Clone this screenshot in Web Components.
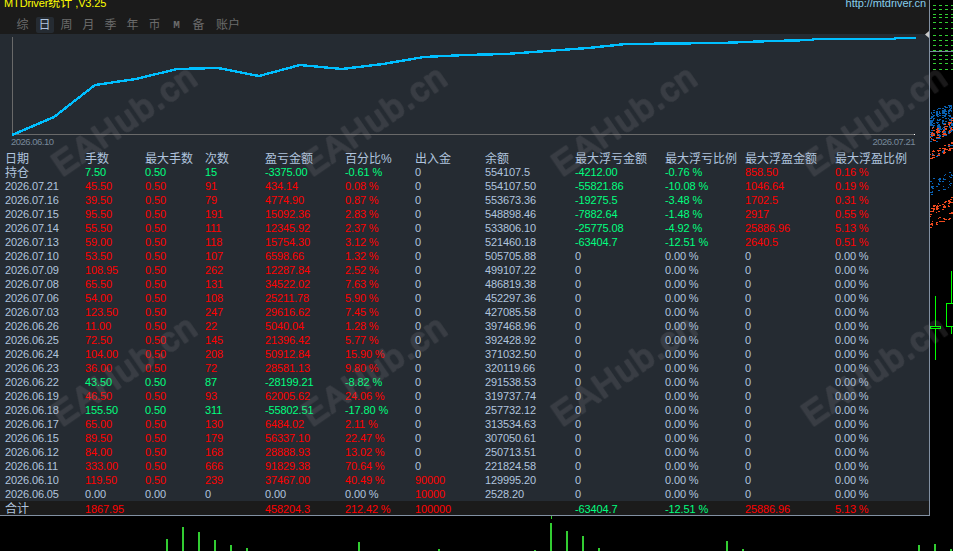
<!DOCTYPE html>
<html lang="zh-CN">
<head>
<meta charset="utf-8">
<title>MTDriver统计</title>
<style>
  body {
    margin: 0;
    width: 953px;
    height: 551px;
    overflow: hidden;
    background: #000;
    font-family: "Liberation Sans", "Noto Sans CJK SC", sans-serif;
    font-size: 11px;
    color: #b0c4de;
  }
  .cjk {
    font-size: 12px;
    letter-spacing: 0;
  }
</style>
</head>
<body>
<trade-desktop>
  <price-chart slot="back"></price-chart>
  <stats-panel>
    <span slot="title">MTDriver<span class="cjk">统计</span> ,V3.25</span>
    <span slot="link">http://mtdriver.cn</span>
    <tab-bar slot="tabs" items="综,日,周,月,季,年,币,M,备,账户" active="日"></tab-bar>
    <equity-chart from="2026.06.10" to="2026.07.21"></equity-chart>
    <stats-table></stats-table>
  </stats-panel>
  <water-mark slot="front">EAHub.cn</water-mark>
</trade-desktop>

<script>
/**
 * Desktop: market chart at the back, panel in the flow, watermark on top.
 */
customElements.define('trade-desktop',
  class TradeDesktop extends HTMLElement {
    constructor () {
      super()
      this.attachShadow({ mode: 'open' }).innerHTML = `
        <style>
          :host {
            display: block;
            position: relative;
            width: 953px;
            height: 551px;
            overflow: hidden;
          }
          .layer {
            position: absolute;
            inset: 0;
            pointer-events: none;
          }
          main {
            position: relative;
          }
        </style>
        <div class="layer"><slot name="back"></slot></div>
        <main><slot></slot></main>
        <div class="layer"><slot name="front"></slot></div>
      `
    }
  }
)

/**
 * Market chart behind the panel.
 */
customElements.define('price-chart',
  class PriceChart extends HTMLElement {
    constructor () {
      super()
      this.attachShadow({ mode: 'open' }).innerHTML = `
        <style>
          :host { display: block; }
          svg { display: block; }
        </style>
        <svg width="953" height="551" shape-rendering="crispEdges"></svg>
      `
    }

    /**
     * Draws one group of ticks that rises to the right.
     */
    ticks (color, y, height, count, seed) {
      let out = ''
      let s = seed
      const next = () => {
        s = (s * 1103515245 + 12345) % 2147483648
        return s / 2147483648
      }
      for (let i = 0; i < count; i++) {
        const col = i % 4
        const dx = Math.floor(next() * 4)
        const x = 930 + col * 6 + dx
        const top = Math.round(y - col * 3 - dx + next() * height)
        out += `<rect x="${x}" y="${top}" width="${1 + Math.round(next() * 1.6)}" height="1" fill="${color}"/>`
      }
      return out
    }

    connectedCallback () {
      let svg = ''
      for (const y of [5, 9, 14, 17, 22, 28, 35, 40, 45, 50, 55, 59, 63, 69]) {
        for (const x of [933, 939, 945, 951]) {
          svg += `<rect x="${x}" y="${y}" width="3" height="1" fill="#32cd32"/>`
        }
      }
      svg += '<rect x="930" y="51" width="23" height="1" fill="#778899"/>'
      svg += this.ticks('#0a62b4', 113, 31, 210, 7)
      svg += this.ticks('#f04a1e', 130, 13, 60, 21)
      svg += this.ticks('#0a62b4', 154, 6, 14, 5)
      svg += this.ticks('#f04a1e', 152, 8, 44, 9)
      svg += this.ticks('#0a62b4', 181, 17, 40, 13)
      svg += this.ticks('#f04a1e', 208, 8, 56, 3)
      svg += this.ticks('#f04a1e', 223, 5, 24, 17)

      // Candles
      svg += `
        <g fill="#000" stroke="#00ff00">
          <path d="M935.5 296V360M951.5 271V334"/>
          <rect x="930.5" y="326.5" width="10" height="2"/>
          <rect x="946.5" y="303.5" width="12" height="23"/>
        </g>`

      // Volumes
      const volumes = [
        [166, 539], [182, 527], [198, 532], [214, 540], [230, 545], [246, 548],
        [358, 542], [438, 549], [534, 550], [550, 523], [566, 531], [582, 536],
        [598, 548], [726, 541], [742, 549], [918, 545], [934, 544], [950, 549]
      ]
      for (const [x, y] of volumes) {
        svg += `<rect x="${x}" y="${y}" width="2" height="${551 - y}" fill="#32cd32"/>`
      }
      svg += '<rect x="551" y="516" width="1" height="3" fill="#32cd32"/>'
      this.shadowRoot.querySelector('svg').innerHTML = svg
    }
  }
)

/**
 * Panel frame with title line and tabs.
 */
customElements.define('stats-panel',
  class StatsPanel extends HTMLElement {
    constructor () {
      super()
      this.attachShadow({ mode: 'open' }).innerHTML = `
        <style>
          :host {
            display: flex;
            flex-direction: column;
            box-sizing: border-box;
            position: relative;
            width: 930px;
            height: 516px;
            background: #252b32;
            border-right: 1px solid #8290a2;
            border-bottom: 1px solid #8290a2;
          }
          header {
            height: 34px;
            background: #1b1b1b;
          }
          .top {
            display: flex;
            justify-content: space-between;
            height: 17px;
            padding: 0 3px 0 4px;
            line-height: 14px;
            margin-top: -4px;
            letter-spacing: -0.12px;
          }
          .title { color: #ffff00; }
          .link { color: #87ceeb; letter-spacing: -0.05px; }
          .top + slot { display: block; padding-top: 4px; }
          .handle {
            position: absolute;
            right: 0;
            top: 31px;
          }
        </style>
        <header>
          <div class="top">
            <div class="title"><slot name="title"></slot></div>
            <div class="link"><slot name="link"></slot></div>
          </div>
          <slot name="tabs"></slot>
        </header>
        <slot></slot>
        <svg class="handle" width="4" height="7"><path d="M4 0V7L0 3.5Z" fill="#c8c8c8"/></svg>
      `
    }
  }
)

/**
 * Period tabs.
 */
customElements.define('tab-bar',
  class TabBar extends HTMLElement {
    constructor () {
      super()
      this.attachShadow({ mode: 'open' }).innerHTML = `
        <style>
          :host {
            display: flex;
            gap: 4px;
            padding-left: 14px;
            font-size: 12px;
            line-height: 17px;
            color: #6b6b6b;
          }
          span {
            height: 16px;
            min-width: 18px;
            text-align: center;
            text-indent: -1px;
            border-radius: 2px;
          }
          span:last-child { padding-left: 5px; }
          .latin { font: bold 11px/17px "Liberation Mono", monospace; }
          .active {
            background: #252b32;
            color: #b0c4de;
          }
        </style>
      `
    }

    connectedCallback () {
      for (const item of this.getAttribute('items').split(',')) {
        const tab = document.createElement('span')
        tab.textContent = item
        tab.classList.toggle('active', item === this.getAttribute('active'))
        tab.classList.toggle('latin', item === 'M')
        this.shadowRoot.appendChild(tab)
      }
    }
  }
)

/**
 * Equity curve.
 */
customElements.define('equity-chart',
  class EquityChart extends HTMLElement {
    constructor () {
      super()
      this.attachShadow({ mode: 'open' }).innerHTML = `
        <style>
          :host {
            display: block;
            height: 117px;
          }
          svg { display: block; }
          div {
            display: flex;
            justify-content: space-between;
            padding: 0 14px 0 11px;
            line-height: 12px;
            font-size: 9.5px;
            letter-spacing: -0.5px;
            color: #778899;
          }
        </style>
        <svg width="929" height="102" viewBox="0 34 929 102" shape-rendering="crispEdges">
          <path d="M12.5 37V134.5H915" fill="none" stroke="#696969"/>
          <rect x="914" y="134" width="1" height="1" fill="#fff"/>
          <polyline fill="none" stroke="#00bfff" stroke-width="2.4"
            points="12,135 54,117 95,85 136,79 177,69 218,68 259,76 300,65 342,69 383,64 424,57 465,55 506,54 547,51 588,48 626,44 720,43 772,41 813,40 813,39 895,39 895,38 916,38"/>
        </svg>
        <div><span id="from"></span><span id="to"></span></div>
      `
    }

    connectedCallback () {
      this.shadowRoot.querySelector('#from').textContent = this.getAttribute('from')
      this.shadowRoot.querySelector('#to').textContent = this.getAttribute('to')
    }
  }
)

const head = '日期|手数|最大手数|次数|盈亏金额|百分比%|出入金|余额|最大浮亏金额|最大浮亏比例|最大浮盈金额|最大浮盈比例'

// Days without floating values leave out the last four cells.
const rows = `持仓|7.50|0.50|15|-3375.00|-0.61 %|0|554107.5|-4212.00|-0.76 %|858.50|0.16 %
2026.07.21|45.50|0.50|91|434.14|0.08 %|0|554107.50|-55821.86|-10.08 %|1046.64|0.19 %
2026.07.16|39.50|0.50|79|4774.90|0.87 %|0|553673.36|-19275.5|-3.48 %|1702.5|0.31 %
2026.07.15|95.50|0.50|191|15092.36|2.83 %|0|548898.46|-7882.64|-1.48 %|2917|0.55 %
2026.07.14|55.50|0.50|111|12345.92|2.37 %|0|533806.10|-25775.08|-4.92 %|25886.96|5.13 %
2026.07.13|59.00|0.50|118|15754.30|3.12 %|0|521460.18|-63404.7|-12.51 %|2640.5|0.51 %
2026.07.10|53.50|0.50|107|6598.66|1.32 %|0|505705.88
2026.07.09|108.95|0.50|262|12287.84|2.52 %|0|499107.22
2026.07.08|65.50|0.50|131|34522.02|7.63 %|0|486819.38
2026.07.06|54.00|0.50|108|25211.78|5.90 %|0|452297.36
2026.07.03|123.50|0.50|247|29616.62|7.45 %|0|427085.58
2026.06.26|11.00|0.50|22|5040.04|1.28 %|0|397468.96
2026.06.25|72.50|0.50|145|21396.42|5.77 %|0|392428.92
2026.06.24|104.00|0.50|208|50912.84|15.90 %|0|371032.50
2026.06.23|36.00|0.50|72|28581.13|9.80 %|0|320119.66
2026.06.22|43.50|0.50|87|-28199.21|-8.82 %|0|291538.53
2026.06.19|46.50|0.50|93|62005.62|24.06 %|0|319737.74
2026.06.18|155.50|0.50|311|-55802.51|-17.80 %|0|257732.12
2026.06.17|65.00|0.50|130|6484.02|2.11 %|0|313534.63
2026.06.15|89.50|0.50|179|56337.10|22.47 %|0|307050.61
2026.06.12|84.00|0.50|168|28888.93|13.02 %|0|250713.51
2026.06.11|333.00|0.50|666|91829.38|70.64 %|0|221824.58
2026.06.10|119.50|0.50|239|37467.00|40.49 %|90000|129995.20
2026.06.05|0.00|0.00|0|0.00|0.00 %|10000|2528.20`

const total = '合计|1867.95|||458204.3|212.42 %|100000||-63404.7|-12.51 %|25886.96|5.13 %'

/**
 * One line of the table.
 */
customElements.define('stats-row',
  class StatsRow extends HTMLElement {
    constructor () {
      super()
      this.attachShadow({ mode: 'open' }).innerHTML = `
        <style>
          :host {
            display: grid;
            grid-template-columns: 80px 60px 60px 60px 80px 70px 70px 90px 90px 80px 90px 90px;
            height: 14px;
            padding-left: 5px;
            line-height: 14px;
            white-space: nowrap;
            letter-spacing: -0.12px;
          }
          :host([kind="total"]) {
            background: #1b1b1b;
            line-height: 16px;
          }
          span { height: 14px; }
          .cjk {
            font-size: 12px;
            line-height: 16px;
            letter-spacing: 0;
          }
          .up { color: #ff0000; }
          .down { color: #00ff7f; }
        </style>
      `
    }

    /**
     * Red for profit, green for loss.
     */
    tone (cells, i) {
      if (this.getAttribute('kind') === 'head' || i === 0 || i === 7) {
        return ''
      }
      const sign = i < 6 ? parseFloat(cells[4]) : parseFloat(cells[i])
      return sign > 0 ? 'up' : sign < 0 ? 'down' : ''
    }

    connectedCallback () {
      const cells = this.getAttribute('cells').split('|')
      if (cells.length < 12) {
        cells.push('0', '0.00 %', '0', '0.00 %')
      }
      cells.forEach((text, i) => {
        const span = document.createElement('span')
        span.textContent = text
        span.className = this.tone(cells, i)
        if (/[^\x00-\x7f]/.test(text)) {
          span.classList.add('cjk')
        }
        this.shadowRoot.appendChild(span)
      })
    }
  }
)

/**
 * Daily statistics.
 */
customElements.define('stats-table',
  class StatsTable extends HTMLElement {
    constructor () {
      super()
      this.attachShadow({ mode: 'open' }).innerHTML = `
        <style>
          :host { display: block; }
        </style>
      `
    }

    addRow (cells, kind) {
      const row = document.createElement('stats-row')
      row.setAttribute('cells', cells)
      row.setAttribute('kind', kind)
      this.shadowRoot.appendChild(row)
    }

    connectedCallback () {
      this.addRow(head, 'head')
      rows.split('\n').forEach(cells => this.addRow(cells, 'day'))
      this.addRow(total, 'total')
    }
  }
)

/**
 * Repeats its text over the whole desktop.
 */
customElements.define('water-mark',
  class WaterMark extends HTMLElement {
    constructor () {
      super()
      this.attachShadow({ mode: 'open' }).innerHTML = `
        <style>
          :host { display: block; }
          svg { display: block; }
          g { opacity: 0.16; }
          text {
            font: 34px "Liberation Sans", sans-serif;
            fill: #a4a0a4;
            stroke: #a4a0a4;
            stroke-width: 2.4px;
            stroke-linejoin: round;
          }
        </style>
        <svg width="953" height="551"><g></g></svg>
      `
    }

    connectedCallback () {
      let marks = ''
      for (const y of [177, 427]) {
        for (const x of [62, 312, 562, 812]) {
          marks += `<text transform="translate(${x} ${y}) rotate(-34.500)" textLength="166">${this.textContent}</text>`
        }
      }
      this.shadowRoot.querySelector('g').innerHTML = marks
    }
  }
)
</script>
</body>
</html>
